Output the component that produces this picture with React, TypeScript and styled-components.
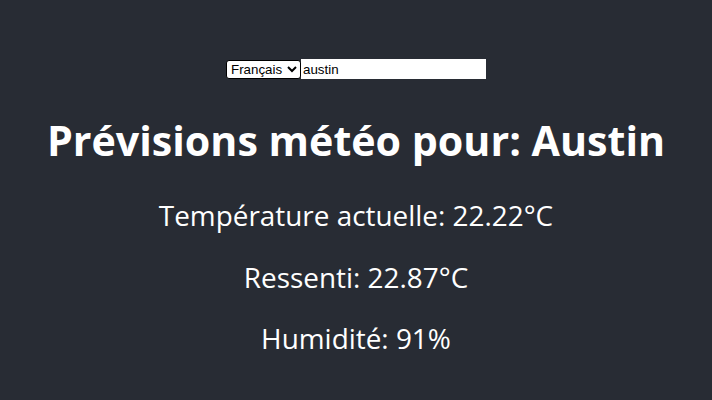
import React from "react";
import styled, { createGlobalStyle } from "styled-components";

const Global = createGlobalStyle`
  html, body { margin: 0; padding: 0; background: #282c34; }
  body { font-family: "Open Sans", sans-serif; }
`;

const Page = styled.div`
  min-height: 400px;
  background: #282c34;
  color: #ffffff;
  display: flex;
  flex-direction: column;
  align-items: center;
  padding-top: 59px;
  box-sizing: border-box;
`;

const Controls = styled.div`
  display: flex;
  align-items: center;
`;

const LangSelect = styled.select`
  font-family: "Liberation Sans", Arial, sans-serif;
  font-size: 13.33px;
  height: 19px;
  width: 75px;
  color: #000;
  background: #fff;
  border: 1px solid #000;
  border-radius: 3px;
  padding: 0;
`;

const CityInput = styled.input`
  font-family: "Liberation Sans", Arial, sans-serif;
  font-size: 13.33px;
  width: 185px;
  height: 20px;
  box-sizing: border-box;
  border: none;
  padding: 1px 2px;
  color: #000;
  background: #fff;
  outline: none;
`;

const Title = styled.h1`
  font-family: "Open Sans", sans-serif;
  font-weight: 700;
  font-size: 41.2px;
  margin: 37px 0 20px;
  line-height: 1.2;
`;

const Line = styled.p`
  font-family: "Open Sans", sans-serif;
  font-size: 27.9px;
  margin: 0;
  line-height: 61.5px;
`;

export default function App() {
  return (
    <>
      <Global />
      <Page>
        <Controls>
          <LangSelect defaultValue="fr">
            <option value="fr">Français</option>
            <option value="en">English</option>
          </LangSelect>
          <CityInput defaultValue="austin" />
        </Controls>
        <Title>Prévisions météo pour: Austin</Title>
        <Line>Température actuelle: 22.22°C</Line>
        <Line>Ressenti: 22.87°C</Line>
        <Line>Humidité: 91%</Line>
      </Page>
    </>
  );
}
